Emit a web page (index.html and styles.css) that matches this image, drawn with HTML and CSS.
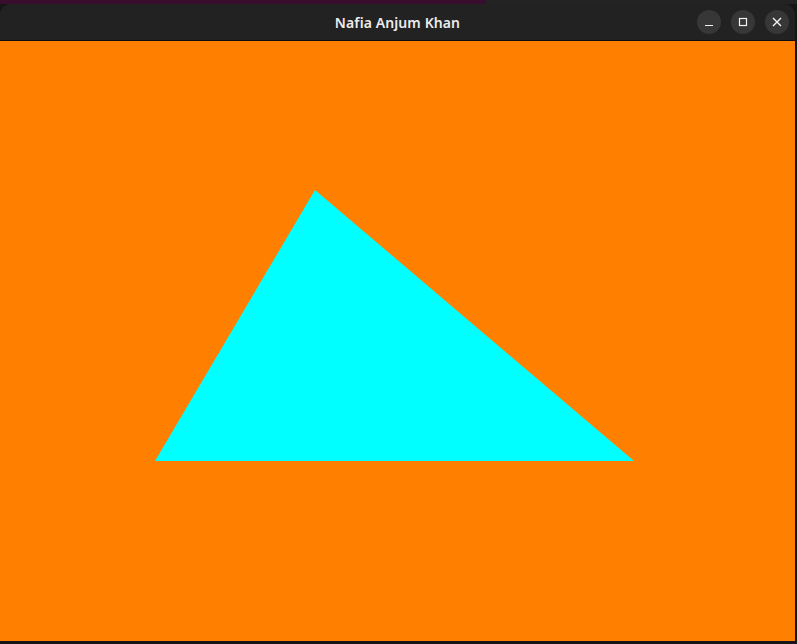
FILE: index.html
```html
<!DOCTYPE html>
<html>
<head>
<meta charset="utf-8">
<link rel="stylesheet" href="styles.css">
</head>
<body>
<div class="desktop">
  <div class="topstrip"><div class="purple"></div></div>
  <div class="window">
    <div class="titlebar">
      <div class="title">Nafia Anjum Khan</div>
      <div class="controls">
        <div class="btn"><svg width="10" height="10" viewBox="0 0 10 10"><path d="M1 8.5h8" stroke="#f2f2f2" stroke-width="1.2"/></svg></div>
        <div class="btn"><svg width="10" height="10" viewBox="0 0 10 10"><rect x="1.5" y="1.5" width="7" height="7" fill="none" stroke="#f2f2f2" stroke-width="1.2"/></svg></div>
        <div class="btn"><svg width="10" height="10" viewBox="0 0 10 10"><path d="M1 1L9 9M9 1L1 9" stroke="#f2f2f2" stroke-width="1.4"/></svg></div>
      </div>
    </div>
    <div class="content">
      <svg class="canvas" width="795" height="600" viewBox="0 0 795 600">
        <polygon points="315,149 155,420 634,420" fill="#00ffff"/>
      </svg>
    </div>
  </div>
</div>
</body>
</html>
```
FILE: styles.css
```css
html, body {
  margin: 0;
  padding: 0;
  background: #1c1c1c;
  overflow: hidden;
}
.desktop {
  width: 797px;
  height: 644px;
  display: flex;
  flex-direction: column;
  background: #161616;
}
.topstrip {
  height: 4px;
  background: #232323;
  display: flex;
}
.purple {
  width: 486px;
  height: 4px;
  background: #3a0d2e;
}
.window {
  width: 795px;
  display: flex;
  flex-direction: column;
  border-radius: 11px 11px 0 0;
  overflow: hidden;
}
.titlebar {
  height: 36px;
  background: #222222;
  border-bottom: 1px solid #0c0c0c;
  display: flex;
  align-items: center;
  justify-content: center;
  position: relative;
}
.title {
  font-family: "Noto Sans", "Open Sans", sans-serif;
  font-weight: 600;
  font-size: 14px;
  color: #ececec;
  letter-spacing: 0.1px;
}
.controls {
  position: absolute;
  right: 6px;
  top: 6px;
  display: flex;
  gap: 10px;
}
.btn {
  width: 24px;
  height: 24px;
  border-radius: 50%;
  background: #373737;
  display: flex;
  align-items: center;
  justify-content: center;
}
.content {
  height: 600px;
  background: #ff8000;
}
.canvas {
  display: block;
}
```
